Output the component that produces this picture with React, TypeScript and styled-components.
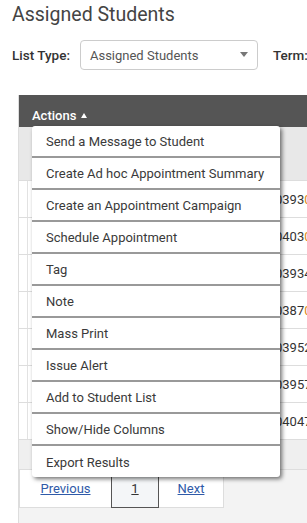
import styled, { createGlobalStyle } from "styled-components";

const GlobalStyle = createGlobalStyle`
  body {
    margin: 0;
    background: #fff;
    font-family: Roboto, "Liberation Sans", sans-serif;
    color: #333;
    overflow: hidden;
  }
`;

const Page = styled.div`
  width: 307px;
  height: 523px;
  overflow: hidden;
`;

const Title = styled.h1`
  margin: 0;
  padding: 4px 12px 0;
  height: 36px;
  font-size: 19.5px;
  font-weight: 400;
  line-height: 22px;
  color: #444;
`;

const FilterRow = styled.div`
  display: flex;
  align-items: center;
  height: 30px;
  padding-left: 12px;
  white-space: nowrap;
`;

const FilterLabel = styled.span`
  flex-shrink: 0;
  font-size: 13.5px;
  font-weight: 500;
  color: #333;
  margin-right: 10px;
`;

const Select = styled.div`
  position: relative;
  flex-shrink: 0;
  box-sizing: border-box;
  width: 178px;
  height: 30px;
  border: 1px solid #ccc;
  border-radius: 4px;
  display: flex;
  align-items: center;
  padding-left: 9px;
  font-size: 13px;
  color: #555;
  margin-right: 15px;
`;

const Caret = styled.span`
  position: absolute;
  right: 9px;
  top: 11px;
  width: 0;
  height: 0;
  border-left: 4px solid transparent;
  border-right: 4px solid transparent;
  border-top: 5px solid #777;
`;

const Tick = styled.span`
  position: absolute;
  right: 9px;
  bottom: -1px;
  width: 8px;
  height: 1px;
  background: #ccc;
`;

const Table = styled.div`
  position: relative;
  margin: 25px 0 0 18px;
  width: 320px;
  background: #f3f3f3;
  height: 428px;
  border-left: 1px solid #ddd;
`;

const HeaderBar = styled.div`
  height: 32px;
  background: #555;
  color: #fff;
  font-size: 13px;
  font-weight: 500;
  display: flex;
  align-items: flex-end;
  padding: 0 0 4px 13px;
  box-sizing: border-box;
  gap: 5px;
`;

const UpArrow = styled.span`
  width: 0;
  height: 0;
  border-left: 3.5px solid transparent;
  border-right: 3.5px solid transparent;
  border-bottom: 5px solid #fff;
  margin-bottom: 5px;
`;

const ColumnHead = styled.div`
  height: 54px;
  background: #e8e8e8;
  border-bottom: 1px solid #ddd;
  box-sizing: border-box;
`;

const Row = styled.div`
  height: 37px;
  box-sizing: border-box;
  background: #fff;
  border-bottom: 1px solid #ddd;
  display: flex;
  align-items: center;
  font-size: 13px;
  color: #333;
`;

const CheckCell = styled.div`
  width: 8px;
  height: 100%;
  border-right: 1px solid #e2e2e2;
`;

const IdCell = styled.div`
  margin-left: 247px;
  white-space: nowrap;
`;

const Orange = styled.span`
  color: #e08a1e;
`;

const FooterBand = styled.div`
  height: 29px;
  background: #efefef;
  border-bottom: 1px solid #ddd;
`;

const Pager = styled.div`
  display: flex;
  align-items: flex-start;
  width: 205px;
  height: 38px;
  background: #fff;
  border: 1px solid #ddd;
  border-top: none;
  box-sizing: border-box;
  font-size: 13px;
`;

const PageCell = styled.div<{ $w: number; $active?: boolean }>`
  width: ${(p) => p.$w}px;
  height: ${(p) => (p.$active ? "38px" : "37px")};
  display: flex;
  align-items: center;
  justify-content: center;
  box-sizing: border-box;
  background: ${(p) => (p.$active ? "#f4f6f8" : "#fff")};
  border: ${(p) => (p.$active ? "1px solid #555" : "none")};
  border-top: none;
  padding-bottom: ${(p) => (p.$active ? "1px" : "0")};
`;

const PageLink = styled.a<{ $plain?: boolean }>`
  color: ${(p) => (p.$plain ? "#333" : "#2f5aa8")};
  text-decoration: underline;
`;

const Menu = styled.ul`
  position: absolute;
  top: 31px;
  left: 13px;
  width: 248px;
  margin: 0;
  padding: 0;
  list-style: none;
  background: #fff;
  border-radius: 3px;
  box-shadow: 2px 2px 4px rgba(0, 0, 0, 0.55);
  overflow: hidden;
`;

const MenuItem = styled.li`
  height: 32px;
  box-sizing: border-box;
  display: flex;
  align-items: center;
  padding: 1px 0 0 14px;
  font-size: 13px;
  color: #3a3a3a;
  border-bottom: 2px solid #999;
  &:last-child {
    border-bottom: none;
    height: 31px;
  }
`;

const actions = [
  "Send a Message to Student",
  "Create Ad hoc Appointment Summary",
  "Create an Appointment Campaign",
  "Schedule Appointment",
  "Tag",
  "Note",
  "Mass Print",
  "Issue Alert",
  "Add to Student List",
  "Show/Hide Columns",
  "Export Results",
];

const ids: [string, string][] = [
  ["03930", "0"],
  ["04030", "0"],
  ["03934", ""],
  ["03870", "0"],
  ["03952", ""],
  ["03957", ""],
  ["04047", ""],
];

export default function App() {
  return (
    <Page>
      <GlobalStyle />
      <Title>Assigned Students</Title>
      <FilterRow>
        <FilterLabel>List Type:</FilterLabel>
        <Select>
          Assigned Students
          <Caret />
          <Tick />
        </Select>
        <FilterLabel>Term:</FilterLabel>
      </FilterRow>
      <Table>
        <HeaderBar>
          Actions <UpArrow />
        </HeaderBar>
        <ColumnHead />
        {ids.map(([id, tail]) => (
          <Row key={id}>
            <CheckCell />
            <IdCell>
              {tail ? id.slice(0, 4) : id}
              {tail && <Orange>{tail}</Orange>}
            </IdCell>
          </Row>
        ))}
        <FooterBand />
        <Pager>
          <PageCell $w={91}>
            <PageLink>Previous</PageLink>
          </PageCell>
          <PageCell $w={48} $active>
            <PageLink $plain>1</PageLink>
          </PageCell>
          <PageCell $w={64}>
            <PageLink>Next</PageLink>
          </PageCell>
        </Pager>
        <Menu>
          {actions.map((a) => (
            <MenuItem key={a}>{a}</MenuItem>
          ))}
        </Menu>
      </Table>
    </Page>
  );
}
